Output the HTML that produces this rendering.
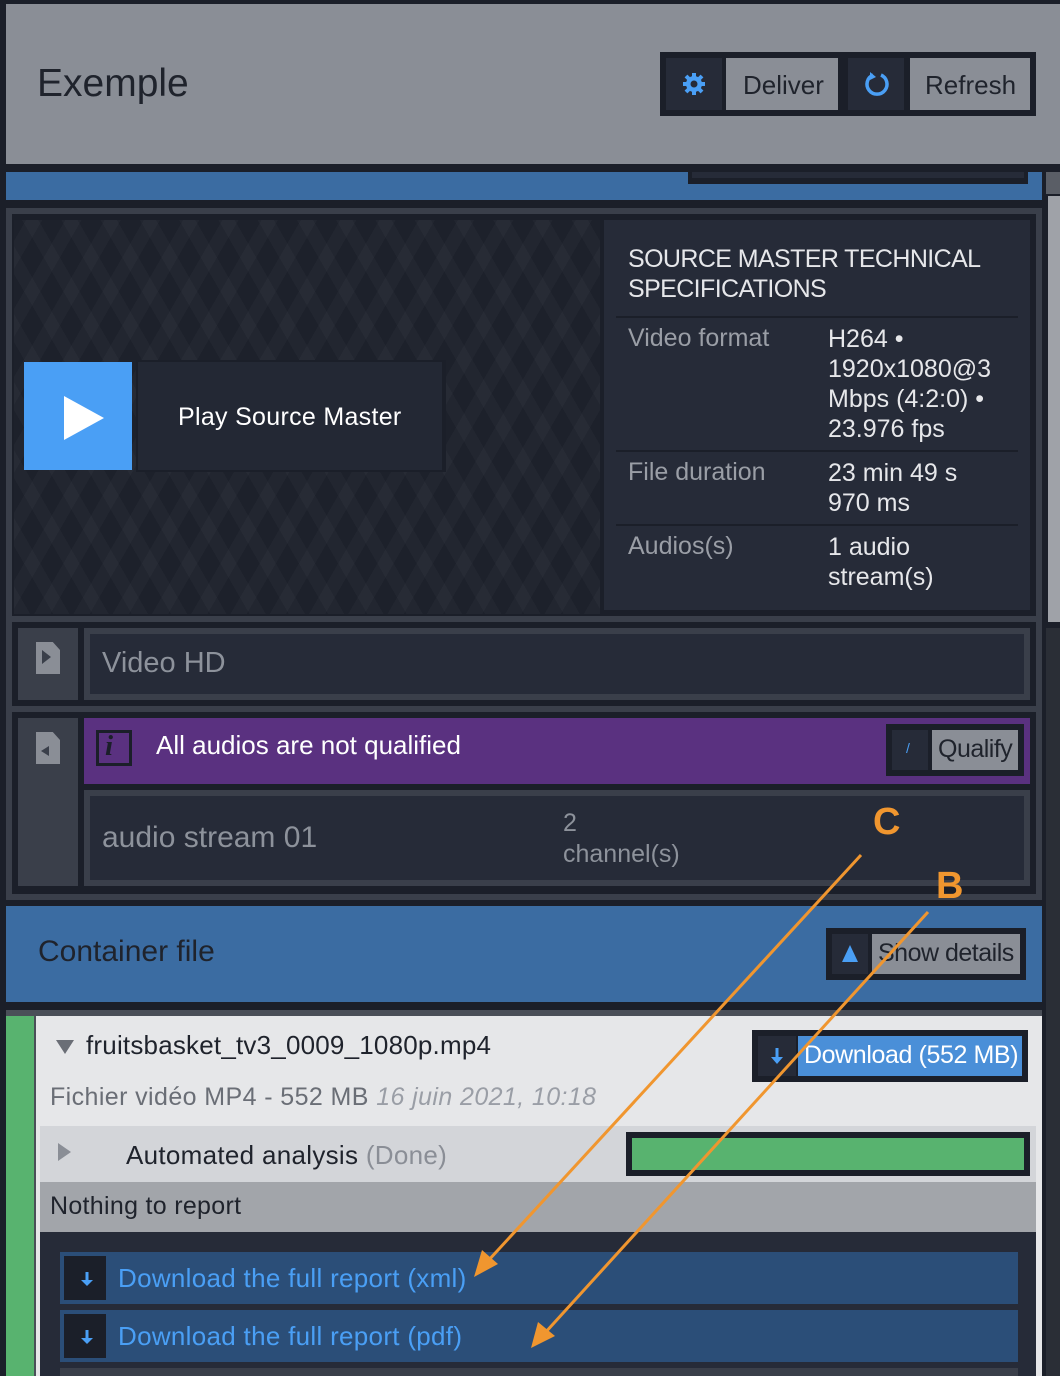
<!DOCTYPE html>
<html><head><meta charset="utf-8"><style>
*{margin:0;padding:0;box-sizing:border-box}
body{width:1060px;height:1376px;background:#1b1f29;position:relative;overflow:hidden;font-family:"Liberation Sans",sans-serif;letter-spacing:0}
div{position:absolute}
.t{white-space:nowrap}
</style></head><body>
<!-- header -->
<div style="left:6px;top:4px;width:1054px;height:160px;background:#8a8e96"></div>
<div class="t" style="left:37px;top:62px;font-size:39px;color:#1f232c">Exemple</div>
<div style="left:660px;top:52px;width:376px;height:64px;background:#1b1f29"></div>
<div style="left:666px;top:58px;width:56px;height:52px;background:#262b38"></div>
<svg style="position:absolute;left:682px;top:72px" width="24" height="24" viewBox="0 0 24 24"><circle cx="12" cy="12" r="8" fill="#4a9ff5"/><g stroke="#4a9ff5" stroke-width="4"><line x1="12" y1="1" x2="12" y2="23"/><line x1="1" y1="12" x2="23" y2="12"/><line x1="4" y1="4" x2="20" y2="20"/><line x1="20" y1="4" x2="4" y2="20"/></g><circle cx="12" cy="12" r="3.5" fill="#262b38"/></svg>
<div style="left:726px;top:58px;width:112px;height:52px;background:#8a8e96"></div>
<div class="t" style="left:743px;top:70px;font-size:26px;color:#1f232c">Deliver</div>
<div style="left:848px;top:58px;width:56px;height:52px;background:#262b38"></div>
<svg style="position:absolute;left:863px;top:70px" width="28" height="28" viewBox="0 0 28 28"><path d="M10 5 A10 10 0 1 0 18 5" fill="none" stroke="#4a9ff5" stroke-width="3.5"/><path d="M7 2 L13 7 L7 10Z" fill="#4a9ff5"/></svg>
<div style="left:910px;top:58px;width:120px;height:52px;background:#8a8e96"></div>
<div class="t" style="left:925px;top:70px;font-size:26px;color:#1f232c">Refresh</div>
<!-- blue strip -->
<div style="left:6px;top:172px;width:1036px;height:28px;background:#3b6ca2"></div>
<div style="left:688px;top:172px;width:340px;height:12px;background:#1b1f29"></div>
<div style="left:692px;top:172px;width:332px;height:6px;background:#262b38"></div>
<!-- scrollbar -->
<div style="left:1046px;top:172px;width:14px;height:22px;background:#5a5e66"></div>
<div style="left:1048px;top:196px;width:12px;height:426px;background:#9fa2a8"></div>
<div style="left:1046px;top:628px;width:14px;height:748px;background:#2a2e36"></div>
<!-- main panel -->
<div style="left:6px;top:208px;width:1036px;height:692px;background:#3a3f4a"></div>
<div style="left:12px;top:214px;width:1024px;height:402px;background:#1b1f29"></div>
<div style="left:14px;top:220px;width:586px;height:394px;background:#1d212b;background-image:repeating-linear-gradient(60deg,rgba(255,255,255,0.025) 0 14px,transparent 14px 34px),repeating-linear-gradient(-60deg,rgba(255,255,255,0.025) 0 14px,transparent 14px 34px)"></div>
<div style="left:24px;top:362px;width:108px;height:108px;background:#4a9ff5"></div>
<svg style="position:absolute;left:62px;top:394px" width="44" height="48"><path d="M2 2 L42 24 L2 46Z" fill="#fff"/></svg>
<div style="left:136px;top:360px;width:310px;height:112px;background:#1b1f29"></div>
<div style="left:138px;top:362px;width:304px;height:108px;background:#232834"></div>
<div class="t" style="left:178px;top:403px;font-size:25px;color:#fff;letter-spacing:0.3px">Play Source Master</div>
<div style="left:604px;top:220px;width:426px;height:390px;background:#262b38"></div>
<div style="left:628px;top:244px;font-size:25px;line-height:30px;color:#e6e7ea;width:390px;letter-spacing:-0.6px">SOURCE MASTER TECHNICAL SPECIFICATIONS</div>
<div style="left:616px;top:316px;width:402px;height:2px;background:#1b1f29"></div>
<div class="t" style="left:628px;top:324px;font-size:25px;color:#9a9ea6">Video format</div>
<div style="left:828px;top:324px;font-size:25px;line-height:30px;color:#e6e7ea;width:200px">H264 •<br>1920x1080@3<br>Mbps (4:2:0) •<br>23.976 fps</div>
<div style="left:616px;top:450px;width:402px;height:2px;background:#1b1f29"></div>
<div class="t" style="left:628px;top:458px;font-size:25px;color:#9a9ea6">File duration</div>
<div style="left:828px;top:458px;font-size:25px;line-height:30px;color:#e6e7ea">23 min 49 s<br>970 ms</div>
<div style="left:616px;top:524px;width:402px;height:2px;background:#1b1f29"></div>
<div class="t" style="left:628px;top:532px;font-size:25px;color:#9a9ea6">Audios(s)</div>
<div style="left:828px;top:532px;font-size:25px;line-height:30px;color:#e6e7ea">1 audio<br>stream(s)</div>
<!-- video HD -->
<div style="left:12px;top:622px;width:1024px;height:84px;background:#1b1f29"></div>
<div style="left:18px;top:628px;width:60px;height:72px;background:#3a3f4a"></div>
<div style="left:36px;top:642px;width:24px;height:32px;background:#8a8e96;clip-path:polygon(0 0,70% 0,100% 25%,100% 100%,0 100%)"></div>
<div style="left:42px;top:650px;width:0;height:0;border-left:9px solid #3a3f4a;border-top:7px solid transparent;border-bottom:7px solid transparent"></div>
<div style="left:84px;top:628px;width:946px;height:72px;background:#3a3f4a"></div>
<div style="left:90px;top:634px;width:934px;height:60px;background:#262b38"></div>
<div class="t" style="left:102px;top:647px;font-size:29px;color:#8d929b">Video HD</div>
<!-- audio -->
<div style="left:12px;top:712px;width:1024px;height:182px;background:#1b1f29"></div>
<div style="left:18px;top:718px;width:60px;height:168px;background:#3a3f4a"></div>
<div style="left:36px;top:732px;width:24px;height:32px;background:#8a8e96;clip-path:polygon(0 0,70% 0,100% 25%,100% 100%,0 100%)"></div>
<div style="left:41px;top:746px;width:0;height:0;border-right:8px solid #3a3f4a;border-top:5px solid transparent;border-bottom:5px solid transparent"></div>
<div style="left:84px;top:718px;width:946px;height:66px;background:#5a3180"></div>
<div style="left:96px;top:730px;width:36px;height:36px;border:3px solid #1b1f29"></div>
<div style="left:105px;top:730px;font-size:29px;font-style:italic;font-weight:bold;font-family:'Liberation Serif',serif;color:#1b1f29">i</div>
<div class="t" style="left:156px;top:730px;font-size:26px;color:#fff">All audios are not qualified</div>
<div style="left:886px;top:724px;width:138px;height:52px;background:#1b1f29"></div>
<div style="left:892px;top:730px;width:36px;height:40px;background:#262b38"></div>
<div style="left:906px;top:740px;font-size:14px;color:#4a9ff5">/</div>
<div style="left:932px;top:730px;width:86px;height:40px;background:#8a8e96"></div>
<div class="t" style="left:938px;top:735px;font-size:25px;color:#1f232c;letter-spacing:-0.5px">Qualify</div>
<div style="left:84px;top:790px;width:946px;height:96px;background:#3a3f4a"></div>
<div style="left:90px;top:796px;width:934px;height:84px;background:#262b38"></div>
<div class="t" style="left:102px;top:821px;font-size:30px;color:#8d929b">audio stream 01</div>
<div style="left:563px;top:808px;font-size:25px;line-height:31px;color:#8d929b">2<br>channel(s)</div>
<!-- container file -->
<div style="left:6px;top:906px;width:1036px;height:96px;background:#3b6ca2"></div>
<div class="t" style="left:38px;top:935px;font-size:30px;color:#1f232c">Container file</div>
<div style="left:826px;top:928px;width:200px;height:52px;background:#1b1f29"></div>
<div style="left:832px;top:934px;width:36px;height:40px;background:#262b38"></div>
<div style="left:842px;top:945px;width:0;height:0;border-bottom:17px solid #4a9ff5;border-left:8px solid transparent;border-right:8px solid transparent"></div>
<div style="left:872px;top:934px;width:148px;height:40px;background:#8a8e96"></div>
<div class="t" style="left:878px;top:939px;font-size:25px;color:#1f232c;letter-spacing:-0.5px">Show details</div>
<!-- file panel -->
<div style="left:6px;top:1010px;width:1036px;height:366px;background:#4a4f58"></div>
<div style="left:6px;top:1016px;width:28px;height:360px;background:#58b36f"></div>
<div style="left:36px;top:1016px;width:1006px;height:360px;background:#e6e7e9"></div>
<div style="left:56px;top:1040px;width:0;height:0;border-top:14px solid #6a6e76;border-left:9px solid transparent;border-right:9px solid transparent"></div>
<div class="t" style="left:86px;top:1030px;font-size:26px;color:#1f232c;letter-spacing:0.2px">fruitsbasket_tv3_0009_1080p.mp4</div>
<div style="left:752px;top:1030px;width:276px;height:52px;background:#1b1f29"></div>
<div style="left:758px;top:1036px;width:38px;height:40px;background:#262b38"></div>
<svg style="position:absolute;left:769px;top:1046px" width="16" height="20" viewBox="0 0 16 20"><path d="M8 2 V14" stroke="#4a9ff5" stroke-width="3"/><path d="M2 11 L14 11 L8 18Z" fill="#4a9ff5"/></svg>
<div style="left:798px;top:1036px;width:224px;height:40px;background:#4a8fd8"></div>
<div class="t" style="left:804px;top:1041px;font-size:25px;color:#fff;letter-spacing:-0.4px">Download (552 MB)</div>
<div class="t" style="left:50px;top:1083px;font-size:25px;color:#6a6e76;letter-spacing:0.4px">Fichier vidéo MP4 - 552 MB <i style="color:#9a9ea6">16 juin 2021, 10:18</i></div>
<div style="left:40px;top:1126px;width:996px;height:56px;background:#d3d5d9"></div>
<div style="left:58px;top:1143px;width:0;height:0;border-left:13px solid #8a8e96;border-top:9px solid transparent;border-bottom:9px solid transparent"></div>
<div class="t" style="left:126px;top:1140px;font-size:26px;color:#1f232c;letter-spacing:0.3px">Automated analysis <span style="color:#8a8e96">(Done)</span></div>
<div style="left:626px;top:1132px;width:404px;height:44px;background:#1b1f29"></div>
<div style="left:632px;top:1138px;width:392px;height:32px;background:#58b36f"></div>
<div style="left:40px;top:1182px;width:996px;height:50px;background:#a2a5aa"></div>
<div class="t" style="left:50px;top:1192px;font-size:25px;color:#1f232c;letter-spacing:0.3px">Nothing to report</div>
<div style="left:40px;top:1232px;width:996px;height:144px;background:#262b38"></div>
<div style="left:60px;top:1252px;width:958px;height:52px;background:#2b4e78"></div>
<div style="left:64px;top:1256px;width:42px;height:44px;background:#1b1f29"></div>
<svg style="position:absolute;left:79px;top:1270px" width="16" height="20" viewBox="0 0 16 20"><path d="M8 2 V12" stroke="#4a9ff5" stroke-width="3"/><path d="M2 10 L14 10 L8 16Z" fill="#4a9ff5"/></svg>
<div class="t" style="left:118px;top:1263px;font-size:26px;color:#4a9ff5;letter-spacing:0.3px">Download the full report (xml)</div>
<div style="left:60px;top:1310px;width:958px;height:52px;background:#2b4e78"></div>
<div style="left:64px;top:1314px;width:42px;height:44px;background:#1b1f29"></div>
<svg style="position:absolute;left:79px;top:1328px" width="16" height="20" viewBox="0 0 16 20"><path d="M8 2 V12" stroke="#4a9ff5" stroke-width="3"/><path d="M2 10 L14 10 L8 16Z" fill="#4a9ff5"/></svg>
<div class="t" style="left:118px;top:1321px;font-size:26px;color:#4a9ff5;letter-spacing:0.3px">Download the full report (pdf)</div>
<div style="left:60px;top:1368px;width:958px;height:8px;background:#3a3f4a"></div>
<!-- annotations -->
<svg style="position:absolute;left:0;top:0" width="1060" height="1376">
<line x1="861" y1="855" x2="487" y2="1262" stroke="#f0962f" stroke-width="3"/>
<path d="M474 1277 L482 1250 L498 1264Z" fill="#f0962f"/>
<line x1="928" y1="912" x2="544" y2="1334" stroke="#f0962f" stroke-width="3"/>
<path d="M531 1348 L538 1322 L555 1336Z" fill="#f0962f"/>
<text x="873" y="834" font-family="Liberation Sans" font-weight="bold" font-size="38" fill="#f0962f">C</text>
<text x="936" y="898" font-family="Liberation Sans" font-weight="bold" font-size="38" fill="#f0962f">B</text>
</svg>
</body></html>
